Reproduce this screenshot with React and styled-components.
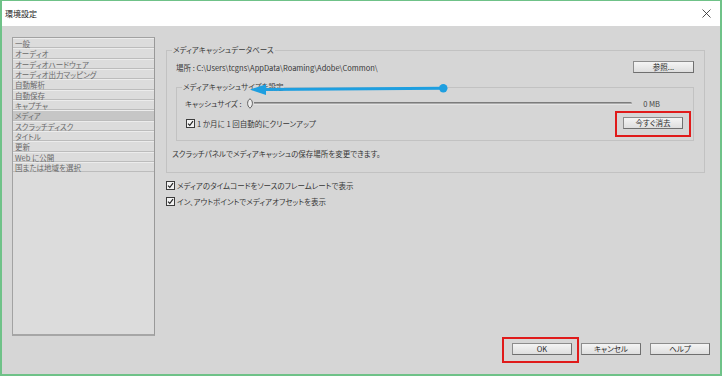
import React from 'react';
import styled, { createGlobalStyle } from 'styled-components';

const GlobalStyle = createGlobalStyle`
  html, body {
    margin: 0;
    padding: 0;
    background: #d6d6d6;
  }
`;

const Window = styled.div`
  position: relative;
  width: 722px;
  height: 376px;
  box-sizing: border-box;
  border: 2px solid #6fc288;
  border-top-width: 1px;
  background: #d6d6d6;
  display: flex;
  flex-direction: column;
  font-family: "Noto Sans CJK JP", "Noto Sans", sans-serif;
  font-feature-settings: "palt";
  font-size: 7.5px;
  color: #363636;
  overflow: hidden;
`;

const TitleBar = styled.div`
  height: 25px;
  flex: none;
  background: #fff;
  display: flex;
  align-items: center;
  justify-content: space-between;
  padding: 0 9px 0 3px;
`;

const Title = styled.span`
  font-size: 8px;
  color: #222;
`;

const Body = styled.div`
  flex: 1;
  display: flex;
  flex-direction: column;
  padding: 11px 10px 0 10px;
`;

const Top = styled.div`
  display: flex;
  align-items: flex-start;
  gap: 11px;
`;

const Sidebar = styled.ul`
  list-style: none;
  margin: 0;
  padding: 0;
  width: 143px;
  height: 299px;
  box-sizing: border-box;
  flex: none;
  background: #dcdcdc;
  border: 1px solid #a2a2a2;
  border-right-color: #999;
  border-bottom: 2px solid #a6a6a6;
`;

const Item = styled.li`
  height: 10.35px;
  box-sizing: border-box;
  padding-left: 2px;
  line-height: 9px;
  color: #6a6a6a;
  background: ${(p) => (p.$active ? '#c6c6c6' : 'transparent')};
  border-top: 1px solid #ececec;
  border-bottom: 1px solid #bcbcbc;
  white-space: nowrap;
`;

const Main = styled.div`
  flex: 1;
  margin: 8px 5px 0 0;
  display: flex;
  flex-direction: column;
`;

const Group = styled.fieldset`
  margin: ${(p) => (p.$inner ? '9px 0 0 4px' : '0')};
  padding: ${(p) => (p.$inner ? '0 10px 11px 5px' : '0 10px 13px 5px')};
  border: 1px solid #c2c2c2;
  min-inline-size: 0;
  display: flex;
  flex-direction: column;
`;

const Legend = styled.legend`
  padding: 0 1px;
  line-height: 10px;
  color: #3a3a3a;
`;

const PathRow = styled.div`
  margin: 6px 0 0 4px;
  height: 12px;
  display: flex;
  align-items: center;
  justify-content: space-between;
`;

const SliderRow = styled.div`
  margin: 5px 23px 0 3px;
  height: 12px;
  display: flex;
  align-items: center;
`;

const SliderLabel = styled.span`
  width: 61px;
  flex: none;
`;

const Track = styled.div`
  flex: 1;
  height: 3px;
  border-radius: 0 2px 2px 0;
  background: linear-gradient(#7c7c7c 0 1px, #a9a9a9 1px 2px, #e4e4e4 2px);
`;

const Value = styled.span`
  margin-left: 11px;
  color: #444;
`;

const CheckRow = styled.label`
  display: flex;
  align-items: center;
  gap: 2px;
  height: ${(p) => (p.$tall ? '12px' : '10px')};
  margin: ${(p) => p.$margin || '0'};
  justify-content: ${(p) => (p.$spread ? 'space-between' : 'flex-start')};
`;

const CheckLeft = styled.span`
  display: flex;
  align-items: center;
  gap: 2px;
`;

const Box = styled.span`
  width: 7px;
  height: 7px;
  flex: none;
  border: 1px solid #3c3c3c;
  background: #f2f2f2;
  display: flex;
  align-items: center;
  justify-content: center;
`;

const Note = styled.div`
  margin-top: 8px;
  line-height: 10px;
`;

const Button = styled.button`
  width: ${(p) => p.$w || 61}px;
  height: ${(p) => p.$h || 12}px;
  padding: 0;
  font: inherit;
  color: #2a2a2a;
  border: 1px solid #8c8c8c;
  border-right-color: #6f6f6f;
  border-bottom-color: #6f6f6f;
  background: linear-gradient(#f4f4f4, #dedede);
  display: flex;
  align-items: center;
  justify-content: center;
  line-height: 1;
`;

const Marked = styled.span`
  position: relative;
  display: inline-flex;
`;

const RedBox = styled.span`
  position: absolute;
  inset: ${(p) => p.$inset};
  border: 2.5px solid #e01b1b;
  pointer-events: none;
`;

const Footer = styled.div`
  margin-top: 7px;
  display: flex;
  justify-content: flex-end;
  gap: 9px;
`;

const Overlay = styled.svg`
  position: absolute;
  left: -2px;
  top: -1px;
  pointer-events: none;
`;

const Check = () => (
  <Box>
    <svg width="7" height="7" viewBox="0 0 7 7">
      <path d="M1 3.6 L2.8 5.4 L6 1.2" fill="none" stroke="#222" strokeWidth="1.1" />
    </svg>
  </Box>
);

const Thumb = () => (
  <svg width="8" height="11" viewBox="0 0 8 11" style={{ flex: 'none' }}>
    <path d="M4 0.8 C7.2 2.6 7.2 8 4 10.2 C0.8 8 0.8 2.6 4 0.8Z" fill="#eee" stroke="#555" strokeWidth="0.9" />
  </svg>
);

const menu = [
  '一般',
  'オーディオ',
  'オーディオハードウェア',
  'オーディオ出力マッピング',
  '自動解析',
  '自動保存',
  'キャプチャ',
  'メディア',
  'スクラッチディスク',
  'タイトル',
  '更新',
  'Web に公開',
  '国または地域を選択',
];

export default function App() {
  return (
    <>
      <GlobalStyle />
      <Window>
        <TitleBar>
          <Title>環境設定</Title>
          <svg width="9" height="9" viewBox="0 0 9 9">
            <path d="M0.5 0.5 L8.5 8.5 M8.5 0.5 L0.5 8.5" stroke="#222" strokeWidth="0.8" />
          </svg>
        </TitleBar>
        <Body>
          <Top>
            <Sidebar>
              {menu.map((m) => (
                <Item key={m} $active={m === 'メディア'}>{m}</Item>
              ))}
            </Sidebar>
            <Main>
              <Group>
                <Legend>メディアキャッシュデータベース</Legend>
                <PathRow>
                  <span>場所 : C:\Users\tcgns\AppData\Roaming\Adobe\Common\</span>
                  <Button>参照...</Button>
                </PathRow>
                <Group $inner>
                  <Legend>メディアキャッシュサイズを設定</Legend>
                  <SliderRow>
                    <SliderLabel>キャッシュサイズ :</SliderLabel>
                    <Thumb />
                    <Track />
                    <Value>0 MB</Value>
                  </SliderRow>
                  <CheckRow $tall $spread $margin="8px 0 0 4px">
                    <CheckLeft>
                      <Check />
                      <span>1 か月に 1 回自動的にクリーンアップ</span>
                    </CheckLeft>
                    <Marked>
                      <Button $w={60}>今すぐ消去</Button>
                      <RedBox $inset="-6px -8px -8px -8px" />
                    </Marked>
                  </CheckRow>
                </Group>
                <Note>スクラッチパネルでメディアキャッシュの保存場所を変更できます。</Note>
              </Group>
              <CheckRow $margin="7px 0 0 0">
                <Check />
                <span>メディアのタイムコードをソースのフレームレートで表示</span>
              </CheckRow>
              <CheckRow $margin="6px 0 0 0">
                <Check />
                <span>イン、アウトポイントでメディアオフセットを表示</span>
              </CheckRow>
            </Main>
          </Top>
          <Footer>
            <Marked>
              <Button $w={60}>OK</Button>
              <RedBox $inset="-6px -7px -8px -10px" />
            </Marked>
            <Button $w={60}>キャンセル</Button>
            <Button $w={60}>ヘルプ</Button>
          </Footer>
        </Body>
        <Overlay width="722" height="376" viewBox="0 0 722 376">
          <line x1="443" y1="88.3" x2="264" y2="89.5" stroke="#1e9fe0" strokeWidth="3" />
          <path d="M250 89.6 L266 84.2 L266 95 Z" fill="#1e9fe0" />
          <circle cx="443.3" cy="88.3" r="4.2" fill="#1e9fe0" />
        </Overlay>
      </Window>
    </>
  );
}
